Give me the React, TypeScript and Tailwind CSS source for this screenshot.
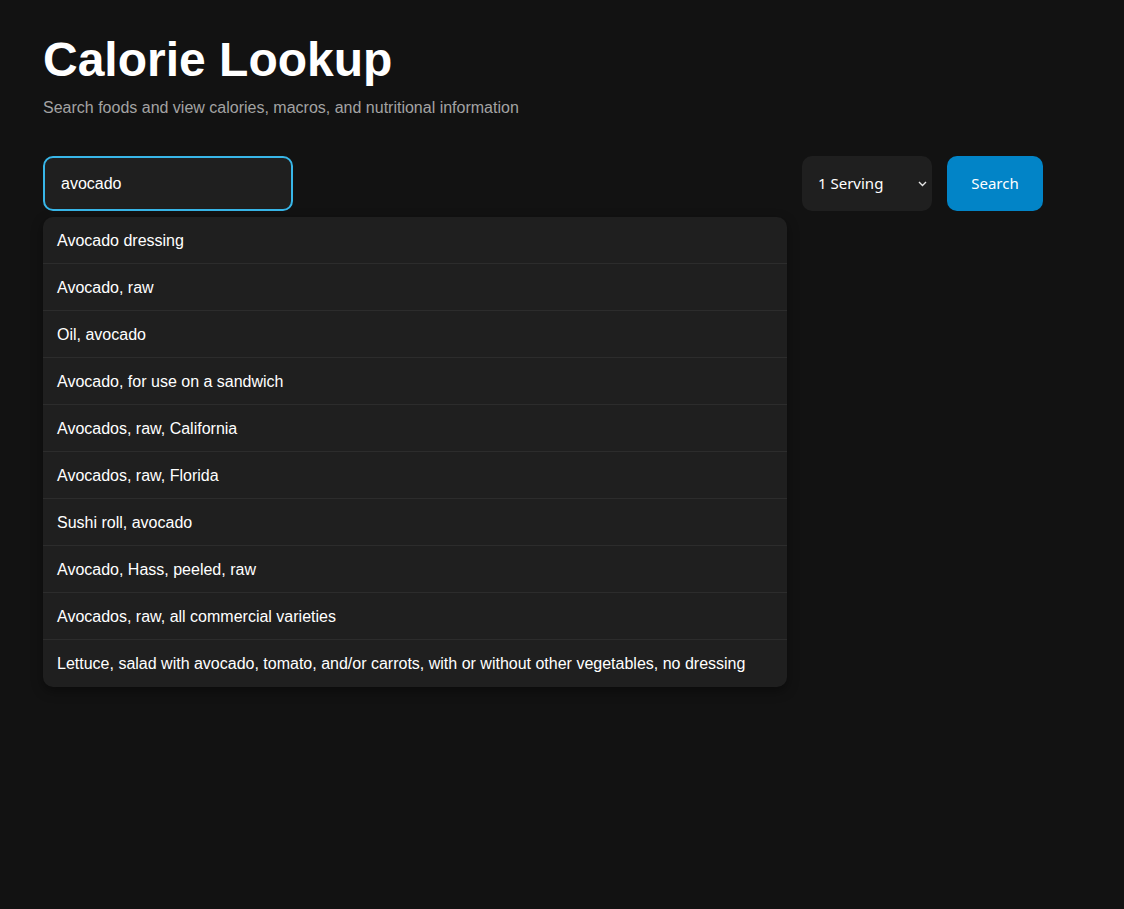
import React from "react";

const items = [
  "Avocado dressing",
  "Avocado, raw",
  "Oil, avocado",
  "Avocado, for use on a sandwich",
  "Avocados, raw, California",
  "Avocados, raw, Florida",
  "Sushi roll, avocado",
  "Avocado, Hass, peeled, raw",
  "Avocados, raw, all commercial varieties",
  "Lettuce, salad with avocado, tomato, and/or carrots, with or without other vegetables, no dressing",
];

export default function App() {
  return (
    <div className="min-h-[909px] bg-[#121212] text-white font-['Liberation_Sans',Arial,sans-serif]">
      <div className="pl-[43px] pt-[36px] w-[1043px]">
        <h1 className="text-[48px] leading-[48px] font-bold">Calorie Lookup</h1>
        <p className="mt-[12px] text-[16px] leading-[24px] text-[#a3a3a3]">
          Search foods and view calories, macros, and nutritional information
        </p>
        <div className="mt-[36px] flex gap-[15px]">
          <div className="relative flex-1">
            <input
              defaultValue="avocado"
              className="w-[250px] h-[55px] rounded-[10px] border-2 border-[#38b6e8] bg-[#1f1f1f] px-[16px] pt-[1px] text-[16px] text-white outline-none font-['Liberation_Sans',Arial,sans-serif]"
            />
            <div className="absolute left-0 right-0 top-[61px] rounded-[10px] bg-[#1f1f1f] overflow-hidden shadow-[0_4px_12px_rgba(0,0,0,0.4)]">
              {items.map((t, i) => (
                <div
                  key={t}
                  className={
                    i < items.length - 1
                      ? "h-[47px] flex items-center px-[14px] pt-[2px] text-[16px] border-b border-[#2c2c2c]"
                      : "h-[47px] flex items-center px-[14px] text-[16px]"
                  }
                >
                  {t}
                </div>
              ))}
            </div>
          </div>
          <div className="relative w-[130px] h-[55px]">
            <select className="appearance-none w-full h-full rounded-[10px] bg-[#1f1f1f] pl-[16px] text-[15px] text-white outline-none font-['Noto_Sans',sans-serif]">
              <option>1 Serving</option>
            </select>
            <svg
              className="absolute right-[5px] top-[25px] pointer-events-none"
              width="9"
              height="6"
              viewBox="0 0 9 6"
              fill="none"
            >
              <path d="M1 1l3.5 3.5L8 1" stroke="#e5e5e5" strokeWidth="1.4" />
            </svg>
          </div>
          <button className="w-[96px] h-[55px] rounded-[10px] bg-[#0284c7] text-[15px] text-white font-['Noto_Sans',sans-serif]">
            Search
          </button>
        </div>
      </div>
    </div>
  );
}
